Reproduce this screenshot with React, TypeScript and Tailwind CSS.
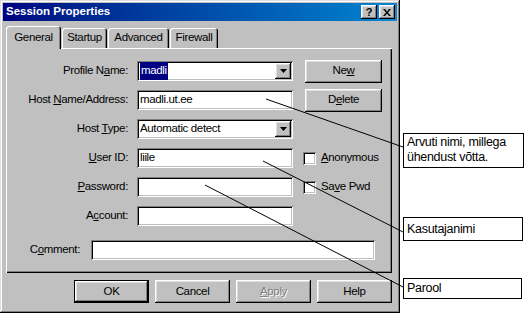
import React from 'react';

const raised =
  'shadow-[inset_-1px_-1px_#000,inset_1px_1px_#fff,inset_-2px_-2px_#808080,inset_2px_2px_#dfdfdf]';
const sunken =
  'shadow-[inset_1px_1px_#808080,inset_-1px_-1px_#fff,inset_2px_2px_#000,inset_-2px_-2px_#c0c0c0]';

const Field = ({ children, dropdown = false, w = 'w-[156px]' }: { children?: React.ReactNode; dropdown?: boolean; w?: string }) => (
  <div className={`${w} h-[20px] bg-white ${sunken} flex items-center pl-[3px] pr-[2px]`}>
    <div className="flex-1 flex items-center overflow-hidden">{children}</div>
    {dropdown && (
      <div className={`w-[16px] h-[16px] bg-[#c0c0c0] ${raised} flex items-center justify-center`}>
        <svg width="7" height="4" viewBox="0 0 7 4">
          <path d="M0 0h7L3.5 4z" fill="#000" />
        </svg>
      </div>
    )}
  </div>
);

const Label = ({ children, w = 'w-[122px]' }: { children: React.ReactNode; w?: string }) => (
  <div className={`${w} text-right whitespace-nowrap`}>{children}</div>
);

const Btn = ({ children, def = false, className = '' }: { children: React.ReactNode; def?: boolean; className?: string }) => (
  <div className={`h-[23px] ${def ? 'border border-black' : ''} ${className}`}>
    <div className={`w-full h-full bg-[#c0c0c0] ${raised} flex items-center justify-center`}>{children}</div>
  </div>
);

const Check = ({ children }: { children: React.ReactNode }) => (
  <div className="flex items-center gap-[5px] ml-[10px]">
    <div className={`w-[13px] h-[13px] bg-white ${sunken}`} />
    <span>{children}</span>
  </div>
);

const Tab = ({ children, active = false, w }: { children: React.ReactNode; active?: boolean; w: string }) => (
  <div
    className={`${w} ${active ? 'h-[23px] -mb-[1px] z-10' : 'h-[20px]'} relative bg-[#c0c0c0] rounded-t-[3px] shadow-[inset_1px_1px_#fff,inset_-1px_0_#000,inset_-2px_0_#808080] flex items-center justify-center`}
  >
    {children}
  </div>
);

export default function App() {
  return (
    <div
      className="relative w-[532px] h-[324px] bg-white text-black"
      style={{ fontFamily: '"Liberation Sans", Arial, sans-serif' }}
    >
      <div className={`w-[400px] h-[313px] bg-[#c0c0c0] p-[3px] flex flex-col text-[11.5px] tracking-[-0.35px] shadow-[inset_-1px_-1px_#000,inset_1px_1px_#dfdfdf,inset_-2px_-2px_#808080,inset_2px_2px_#fff]`}>
        {/* title bar */}
        <div className="h-[18px] bg-gradient-to-r from-[#000080] to-[#1084d0] flex items-center justify-between pl-[3px] pr-[2px]">
          <span className="text-white font-bold text-[11.5px] tracking-normal">Session Properties</span>
          <div className="flex gap-[2px]">
            <div className={`w-[16px] h-[14px] bg-[#c0c0c0] ${raised} flex items-center justify-center font-bold text-[11px] leading-none`}>?</div>
            <div className={`w-[16px] h-[14px] bg-[#c0c0c0] ${raised} flex items-center justify-center`}>
              <svg width="8" height="7" viewBox="0 0 8 7">
                <path d="M0 0h2l2 2.5L6 0h2L5 3.5 8 7H6L4 4.5 2 7H0l3-3.5z" fill="#000" />
              </svg>
            </div>
          </div>
        </div>

        {/* tabs */}
        <div className="mt-[5px] h-[22px] flex items-end pl-[3px] gap-[1px]">
          <Tab active w="w-[55px]">General</Tab>
          <Tab w="w-[45px]">Startup</Tab>
          <Tab w="w-[61px]">Advanced</Tab>
          <Tab w="w-[48px]">Firewall</Tab>
        </div>

        {/* panel */}
        <div className="ml-[3px] w-[386px] h-[225px] shadow-[inset_1px_1px_#fff,inset_-1px_-1px_#000,inset_-2px_-2px_#808080] pt-[13px] flex flex-col gap-[9px]">
          <div className="h-[20px] flex items-center">
            <Label>Profile N<u>a</u>me:</Label>
            <div className="ml-[9px]">
              <Field dropdown>
                <span className="bg-[#000080] text-white px-[1px]">madli</span>
              </Field>
            </div>
            <Btn className="ml-[12px] w-[77px]">Ne<u>w</u></Btn>
          </div>
          <div className="h-[20px] flex items-center">
            <Label>Host <u>N</u>ame/Address:</Label>
            <div className="ml-[9px]">
              <Field>madli.ut.ee</Field>
            </div>
            <Btn className="ml-[12px] w-[77px]">D<u>e</u>lete</Btn>
          </div>
          <div className="h-[20px] flex items-center">
            <Label>Host <u>T</u>ype:</Label>
            <div className="ml-[9px]">
              <Field dropdown>Automatic detect</Field>
            </div>
          </div>
          <div className="h-[20px] flex items-center">
            <Label><u>U</u>ser ID:</Label>
            <div className="ml-[9px]">
              <Field>liile</Field>
            </div>
            <Check><u>A</u>nonymous</Check>
          </div>
          <div className="h-[20px] flex items-center">
            <Label><u>P</u>assword:</Label>
            <div className="ml-[9px]">
              <Field />
            </div>
            <Check>Sa<u>v</u>e Pwd</Check>
          </div>
          <div className="h-[20px] flex items-center">
            <Label>A<u>c</u>count:</Label>
            <div className="ml-[9px]">
              <Field />
            </div>
          </div>
          <div className="h-[20px] flex items-center mt-[5px]">
            <Label w="w-[74px]">C<u>o</u>mment:</Label>
            <div className="ml-[11px]">
              <Field w="w-[284px]" />
            </div>
          </div>
        </div>

        {/* buttons */}
        <div className="mt-[7px] flex justify-end gap-[6px] pr-[5px]">
          <Btn def className="w-[75px]">OK</Btn>
          <Btn className="w-[75px]">Cancel</Btn>
          <Btn className="w-[75px]">
            <span className="text-[#808080] [text-shadow:1px_1px_#fff]"><u>A</u>pply</span>
          </Btn>
          <Btn className="w-[75px]">Help</Btn>
        </div>
      </div>

      {/* callouts */}
      <div className="absolute left-[403px] top-[133px] w-[121px] h-[35px] border border-black bg-white px-[3px] text-[12.5px] leading-[15px] tracking-[-0.3px] pt-[1px]">
        Arvuti nimi, millega
        <br />
        ühendust võtta.
      </div>
      <div className="absolute left-[403px] top-[217px] w-[120px] h-[24px] border border-black bg-white px-[3px] text-[12.5px] tracking-[-0.3px] flex items-center">
        Kasutajanimi
      </div>
      <div className="absolute left-[403px] top-[278px] w-[119px] h-[21px] border border-black bg-white px-[3px] text-[12.5px] tracking-[-0.3px] flex items-center">
        Parool
      </div>

      <svg className="absolute inset-0 pointer-events-none" width="532" height="324">
        <line x1="266" y1="99" x2="403" y2="147" stroke="#000" strokeWidth="1" />
        <line x1="263" y1="161" x2="403" y2="232" stroke="#000" strokeWidth="1" />
        <line x1="205" y1="185" x2="403" y2="287" stroke="#000" strokeWidth="1" />
      </svg>
    </div>
  );
}
